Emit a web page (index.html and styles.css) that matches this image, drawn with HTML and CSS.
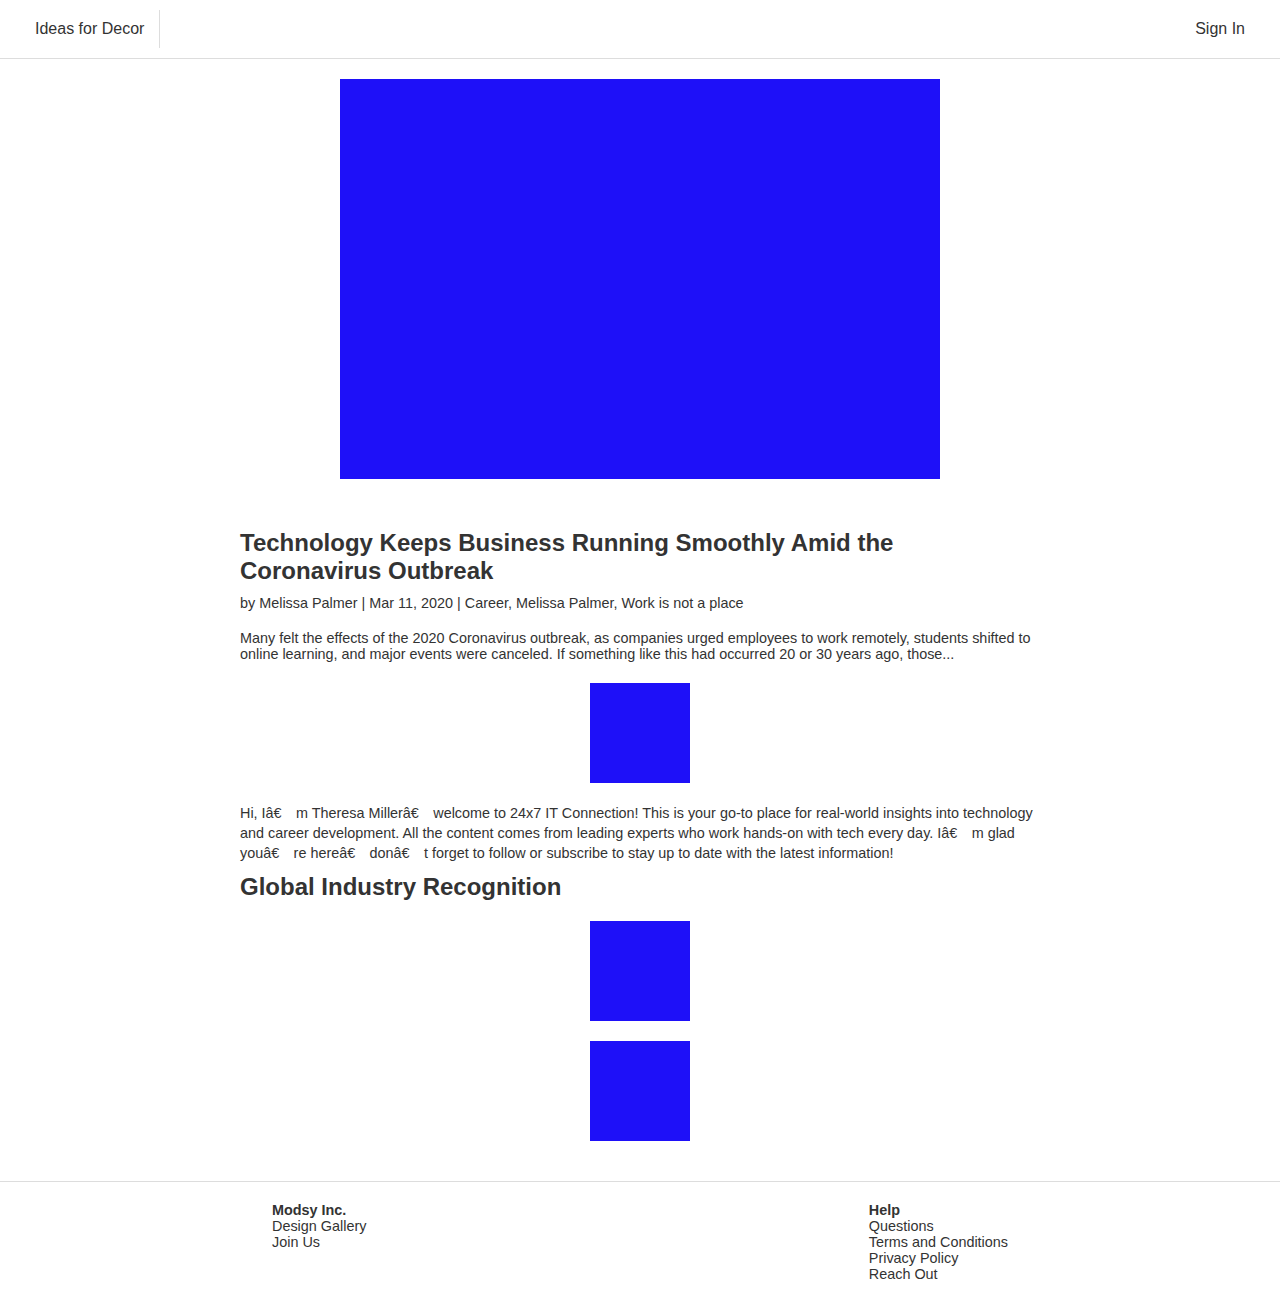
FILE: index.html
```html
<!DOCTYPE html>
<html lang="en">
<head>
<meta charset="utf-8">
<title>Ideas for Decor</title>
<link rel="stylesheet" href="styles.css">
</head>
<body>
<header class="topbar">
  <div class="brand">Ideas for Decor</div>
  <div class="signin">Sign In</div>
</header>
<main class="page">
  <div class="hero"></div>
  <article class="article">
    <h1 class="title">Technology Keeps Business Running Smoothly Amid the Coronavirus Outbreak</h1>
    <p class="meta">by Melissa Palmer | Mar 11, 2020 | Career, Melissa Palmer, Work is not a place</p>
    <p class="excerpt">Many felt the effects of the 2020 Coronavirus outbreak, as companies urged employees to work remotely, students shifted to online learning, and major events were canceled. If something like this had occurred 20 or 30 years ago, those...</p>
    <div class="thumb"></div>
    <p class="bio">Hi, Iâ€&emsp;m Theresa Millerâ€&emsp;welcome to 24x7 IT Connection! This is your go-to place for real-world insights into technology and career development. All the content comes from leading experts who work hands-on with tech every day. Iâ€&emsp;m glad youâ€&emsp;re hereâ€&emsp;donâ€&emsp;t forget to follow or subscribe to stay up to date with the latest information!</p>
    <h2 class="subtitle">Global Industry Recognition</h2>
    <div class="thumb"></div>
    <div class="thumb"></div>
  </article>
</main>
<footer class="footer">
  <div class="footer-inner">
    <div class="fcol">
      <div class="fhead">Modsy Inc.</div>
      <div>Design Gallery</div>
      <div>Join Us</div>
    </div>
    <div class="fcol">
      <div class="fhead">Help</div>
      <div>Questions</div>
      <div>Terms and Conditions</div>
      <div>Privacy Policy</div>
      <div>Reach Out</div>
    </div>
  </div>
</footer>
</body>
</html>
```
FILE: styles.css
```css
* { box-sizing: border-box; }
html, body { margin: 0; padding: 0; background: #fff; }
body {
  font-family: "Liberation Sans", Arial, sans-serif;
  color: #333;
}
.topbar {
  height: 59px;
  border-bottom: 1px solid #ddd;
  display: flex;
  align-items: center;
  justify-content: space-between;
  padding: 0 35px;
  font-size: 16px;
}
.brand {
  height: 38px;
  display: flex;
  align-items: center;
  padding-right: 15px;
  border-right: 1px solid #ddd;
}
.page {
  display: flex;
  flex-direction: column;
  align-items: center;
  padding-top: 20px;
}
.hero {
  width: 600px;
  height: 400px;
  background: #1e10f8;
}
.article {
  width: 800px;
  margin-top: 50px;
  font-size: 14.4px;
}
.title {
  font-size: 24px;
  line-height: 28px;
  font-weight: bold;
  margin: 0 0 10px;
  padding-right: 140px;
}
.meta {
  margin: 0 0 19px;
  line-height: 16px;
}
.excerpt {
  margin: 0 0 21px;
  line-height: 16px;
}
.thumb {
  width: 100px;
  height: 100px;
  background: #1e10f8;
  margin: 0 auto 20px;
}
.bio {
  margin: 0 0 10px;
  line-height: 20px;
}
.subtitle {
  font-size: 24px;
  line-height: 28px;
  font-weight: bold;
  margin: 0 0 20px;
}
.footer {
  margin-top: 20px;
  border-top: 1px solid #ddd;
  padding: 20px 0 20px;
  font-size: 14.4px;
  line-height: 16px;
}
.footer-inner {
  width: 800px;
  margin: 0 auto;
  padding: 0 32px;
  display: flex;
  justify-content: space-between;
}
.fhead { font-weight: bold; }
```
